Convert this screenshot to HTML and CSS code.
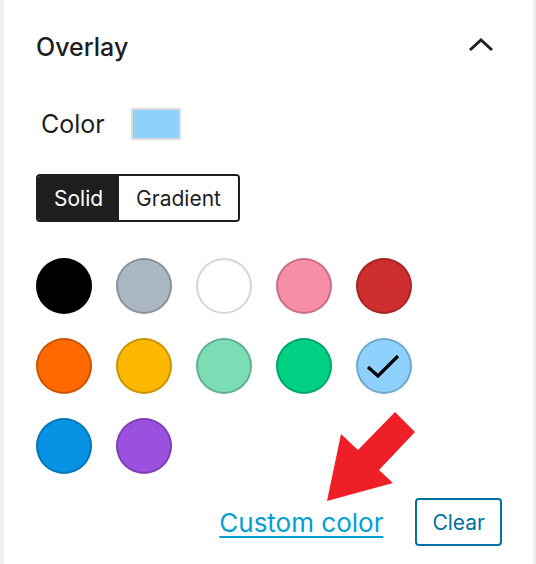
FILE: index.html
```html
<!DOCTYPE html>
<html lang="en">
<head>
<meta charset="UTF-8">
<meta name="viewport" content="width=device-width, initial-scale=1.0">
<title>Overlay</title>
<link rel="stylesheet" href="styles.css">
</head>
<body>

<div class="panel">
    <div class="panel-head">
        <h2>Overlay</h2>
        <svg class="chevron" width="26" height="16" viewBox="0 0 26 16">
            <polyline points="2,13 13,3 24,13" fill="none" stroke="#1e1e1e" stroke-width="3"/>
        </svg>
    </div>

    <div class="color-row">
        <span class="label">Color</span>
        <span class="swatch"></span>
    </div>

    <div class="toggle">
        <button class="toggle-btn active">Solid</button>
        <button class="toggle-btn">Gradient</button>
    </div>

    <div class="palette">
        <span class="dot" style="background:#000000"></span>
        <span class="dot" style="background:#abb8c3"></span>
        <span class="dot white" style="background:#ffffff"></span>
        <span class="dot" style="background:#f78da7"></span>
        <span class="dot" style="background:#cf2e2e"></span>
        <span class="dot" style="background:#ff6900"></span>
        <span class="dot" style="background:#fcb900"></span>
        <span class="dot" style="background:#7bdcb5"></span>
        <span class="dot" style="background:#00d084"></span>
        <span class="dot" style="background:#8ed1fc">
            <svg class="check" width="56" height="56" viewBox="0 0 56 56">
                <polyline points="12,29 22,38 42,18" fill="none" stroke="#000" stroke-width="3.2"/>
            </svg>
        </span>
        <span class="dot" style="background:#0693e3"></span>
        <span class="dot" style="background:#9b51e0"></span>
    </div>

    <div class="actions">
        <a class="custom-link" href="#">Custom color</a>
        <button class="clear-btn">Clear</button>
    </div>

    <svg class="arrow" width="536" height="564" viewBox="0 0 536 564">
        <polygon points="327,501 341,434 358,450 395,412 415,432 379,470 393,483" fill="#ee1f26"/>
    </svg>
</div>

</body>
</html>
```

FILE: styles.css
```css
body {
    margin: 0;
    padding: 0;
    font-family: Inter, "Liberation Sans", sans-serif;
    color: #1e1e1e;
    background: #fff;
}
.panel {
    position: relative;
    box-sizing: border-box;
    width: 536px;
    height: 564px;
    border-left: 4px solid #f0f0f0;
    border-right: 3px solid #f0f0f0;
    padding: 29px 31px 0 32px;
    background: #fff;
}
.panel-head {
    display: flex;
    align-items: center;
    justify-content: space-between;
    height: 36px;
    padding-right: 8px;
}
.panel-head h2 {
    margin: 0;
    font-size: 25px;
    font-weight: 500;
    line-height: 36px;
}
.chevron {
    display: block;
    margin-top: -4px;
}
.color-row {
    display: flex;
    align-items: center;
    margin-top: 43px;
    padding-left: 5px;
}
.label {
    font-size: 25px;
    line-height: 32px;
}
.swatch {
    display: block;
    box-sizing: border-box;
    width: 50px;
    height: 32px;
    margin-left: 26px;
    border: 2px solid #dcdcdc;
    background: #90d1fb;
}
.toggle {
    display: inline-flex;
    margin-top: 34px;
    border: 2px solid #1e1e1e;
    border-radius: 4px;
    overflow: hidden;
}
.toggle-btn {
    font-family: inherit;
    font-size: 21px;
    color: #1e1e1e;
    background: #fff;
    border: none;
    height: 44px;
    padding: 0 17px;
    cursor: pointer;
}
.toggle-btn.active {
    background: #1e1e1e;
    color: #fff;
    padding: 0 16px;
}
.palette {
    display: grid;
    grid-template-columns: repeat(5, 56px);
    gap: 24px;
    margin-top: 36px;
}
.dot {
    position: relative;
    display: block;
    width: 56px;
    height: 56px;
    border-radius: 50%;
    box-shadow: inset 0 0 0 2px rgba(0, 0, 0, 0.2);
}
.dot.white {
    box-shadow: inset 0 0 0 2px #d6d6d6;
}
.check {
    display: block;
}
.actions {
    display: flex;
    align-items: center;
    justify-content: flex-end;
    gap: 32px;
    margin-top: 24px;
}
.custom-link {
    font-size: 26px;
    color: #00a0d2;
    text-decoration: underline;
    text-underline-offset: 4px;
    text-decoration-thickness: 2px;
}
.clear-btn {
    box-sizing: border-box;
    height: 48px;
    padding: 0 15px;
    font-family: inherit;
    font-size: 21px;
    color: #0071a1;
    background: #fff;
    border: 2px solid #0071a1;
    border-radius: 4px;
    cursor: pointer;
}
.arrow {
    position: absolute;
    left: -4px;
    top: 0;
    pointer-events: none;
}
```
